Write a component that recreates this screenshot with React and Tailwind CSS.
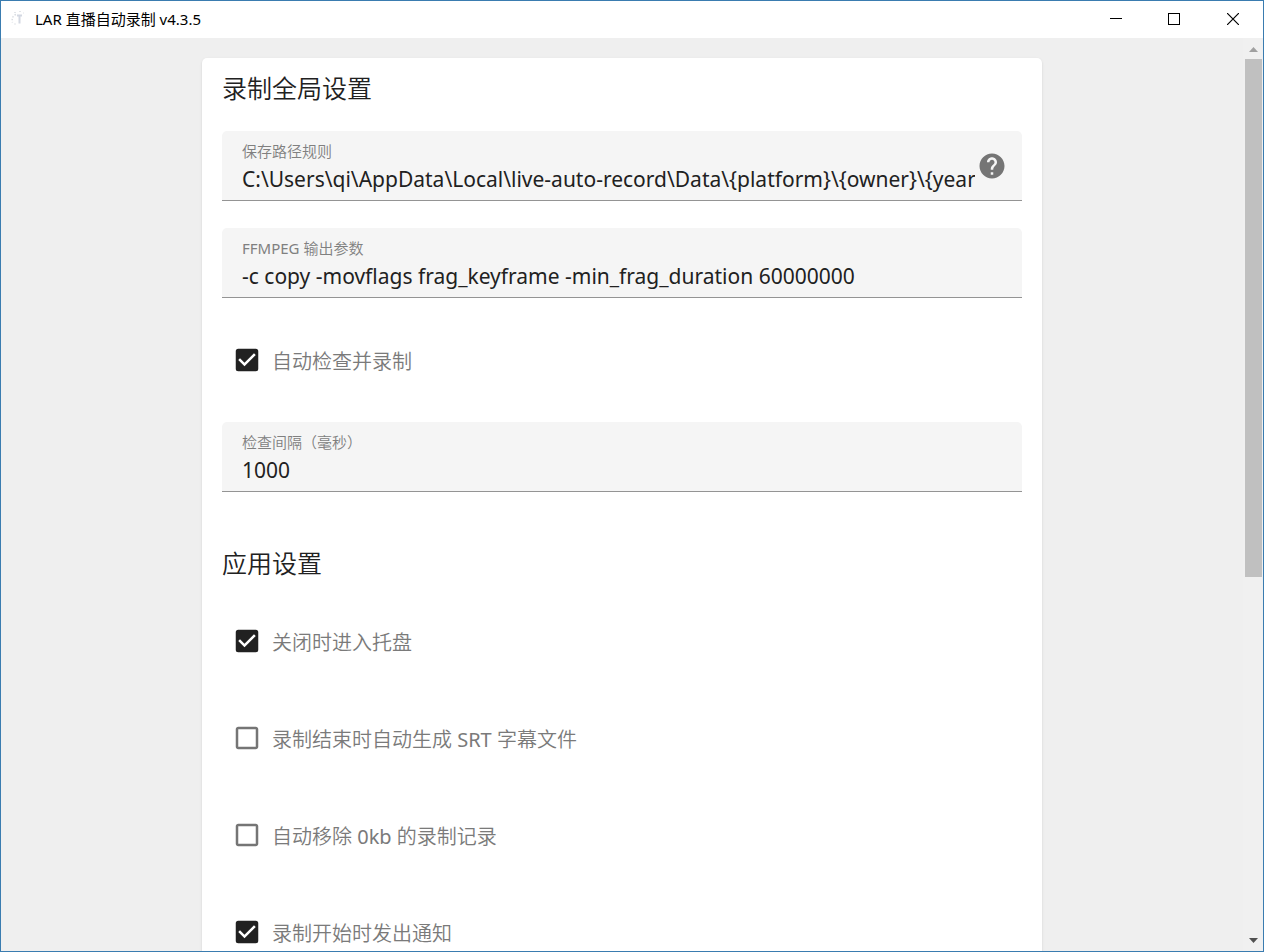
import React, { useId, useState } from 'react';
import { MdCheckBox, MdCheckBoxOutlineBlank, MdHelp } from 'react-icons/md';

const initialSettings = {
  savePath: 'C:\\Users\\qi\\AppData\\Local\\live-auto-record\\Data\\{platform}\\{owner}\\{year}',
  ffmpegArgs: '-c copy -movflags frag_keyframe -min_frag_duration 60000000',
  autoRecord: true,
  interval: '1000',
  closeToTray: true,
  autoSrt: false,
  removeEmpty: false,
  notify: true,
};

function TitleBar() {
  return (
    <header className="flex h-[37px] shrink-0 items-center bg-white pb-px pl-2 font-['Noto_Sans','Noto_Sans_CJK_SC',sans-serif]">
      <svg width="18" height="18" viewBox="0 0 18 18" fill="none" aria-hidden="true">
        <path d="M7 4.5C4 5.500 2.500 8 3.500 12.500" stroke="#d9dde2" strokeWidth="1.500" strokeDasharray="1.500 1.500" />
        <path d="M5 2.500h2M10 1.500h2M14 3h1" stroke="#e2e5e9" />
        <path d="M8 5.500h5M10.500 5.500v8" stroke="#d3d8e2" strokeWidth="2" />
        <path d="M5 14h2" stroke="#e2e5e9" />
      </svg>
      <h1 className="ml-2 flex-1 pb-px text-[15px] leading-5 text-black">LAR 直播自动录制 v4.3.5</h1>
      <div className="flex h-full text-black">
        <button type="button" aria-label="最小化" className="flex w-[58px] items-center justify-center">
          <svg width="12" height="12" viewBox="0 0 12 12" stroke="currentColor" shapeRendering="crispEdges">
            <path d="M0 5.500h12" />
          </svg>
        </button>
        <button type="button" aria-label="最大化" className="flex w-[58px] items-center justify-center">
          <svg width="12" height="12" viewBox="0 0 12 12" fill="none" stroke="currentColor" shapeRendering="crispEdges">
            <path d="M.5.5h11v11H.5z" />
          </svg>
        </button>
        <button type="button" aria-label="关闭" className="flex w-[60px] items-center justify-center">
          <svg width="12" height="12" viewBox="0 0 12 12" stroke="currentColor" strokeWidth="1.200">
            <path d="M0 0l12 12M12 0L0 12" />
          </svg>
        </button>
      </div>
    </header>
  );
}

function Field({ label, value, onChange, help }) {
  const id = useId();

  return (
    <div className="flex h-[70px] items-center rounded-t-[5px] border-b border-[#949494] bg-[#f5f5f5] pr-[15px] pl-5">
      <div className="flex min-w-0 flex-1 flex-col pt-1.5">
        <label htmlFor={id} className="text-[15px] leading-5 text-[#808080]">
          {label}
        </label>
        <input
          id={id}
          value={value}
          onChange={(e) => onChange(e.target.value)}
          className="h-9 w-full bg-transparent text-[21px] text-[#212121] outline-none"
        />
      </div>
      {help && (
        <button type="button" aria-label="帮助" className="ml-0.5 text-[#757575]">
          <MdHelp size={30} />
        </button>
      )}
    </div>
  );
}

function CheckRow({ label, checked, onChange }) {
  const Icon = checked ? MdCheckBox : MdCheckBoxOutlineBlank;

  return (
    <label className="flex h-[70px] items-center gap-2.5 pl-2.5 text-xl text-[#7a7a7a]">
      <span className="grid size-[30px] shrink-0">
        <input
          type="checkbox"
          checked={checked}
          onChange={(e) => onChange(e.target.checked)}
          className="col-start-1 row-start-1 size-[30px] appearance-none"
        />
        <Icon
          size={30}
          className={`pointer-events-none col-start-1 row-start-1 ${checked ? 'text-[#212121]' : 'text-[#757575]'}`}
        />
      </span>
      <span className="pt-1">{label}</span>
    </label>
  );
}

function Section({ title, children }) {
  return (
    <section>
      <h2 className="mb-[23px] text-[25px] leading-10 text-[#212121]">{title}</h2>
      <div className="flex flex-col gap-[27px]">{children}</div>
    </section>
  );
}

function ScrollBar() {
  return (
    <div className="flex w-5 shrink-0 flex-col items-center bg-[#f0f0f0] pr-px pl-0.5" aria-hidden="true">
      <svg width="17" height="21" viewBox="0 0 17 21" fill="#a0a0a0" className="shrink-0">
        <path d="M4 14l4.500-5 4.500 5z" />
      </svg>
      <div className="min-h-0 w-full flex-1">
        <div className="h-[59.5%] w-full bg-[#c0c0c0]" />
      </div>
      <svg width="17" height="21" viewBox="0 0 17 21" fill="#505050" className="shrink-0">
        <path d="M4 8l4.500 5 4.500-5z" />
      </svg>
    </div>
  );
}

export default function App() {
  const [settings, setSettings] = useState(initialSettings);

  const bind = (key) => (value) => setSettings({ ...settings, [key]: value });

  return (
    <div
      lang="zh-CN"
      className="flex h-screen flex-col border border-[#3a7cb0] bg-[#efefef] font-['Noto_Sans','Noto_Sans_CJK_SC_DemiLight','Noto_Sans_CJK_SC',sans-serif]"
    >
      <TitleBar />
      <div className="flex min-h-0 flex-1">
        <main className="min-w-0 flex-1 overflow-hidden px-5 pt-5">
          <div className="mx-auto flex max-w-[840px] flex-col gap-[51px] rounded-[5px] bg-white px-5 pt-2.5 pb-10 shadow-sm">
            <Section title="录制全局设置">
              <Field label="保存路径规则" value={settings.savePath} onChange={bind('savePath')} help />
              <Field label="FFMPEG 输出参数" value={settings.ffmpegArgs} onChange={bind('ffmpegArgs')} />
              <CheckRow label="自动检查并录制" checked={settings.autoRecord} onChange={bind('autoRecord')} />
              <Field label="检查间隔（毫秒）" value={settings.interval} onChange={bind('interval')} />
            </Section>
            <Section title="应用设置">
              <CheckRow label="关闭时进入托盘" checked={settings.closeToTray} onChange={bind('closeToTray')} />
              <CheckRow label="录制结束时自动生成 SRT 字幕文件" checked={settings.autoSrt} onChange={bind('autoSrt')} />
              <CheckRow label="自动移除 0kb 的录制记录" checked={settings.removeEmpty} onChange={bind('removeEmpty')} />
              <CheckRow label="录制开始时发出通知" checked={settings.notify} onChange={bind('notify')} />
            </Section>
          </div>
        </main>
        <ScrollBar />
      </div>
    </div>
  );
}
